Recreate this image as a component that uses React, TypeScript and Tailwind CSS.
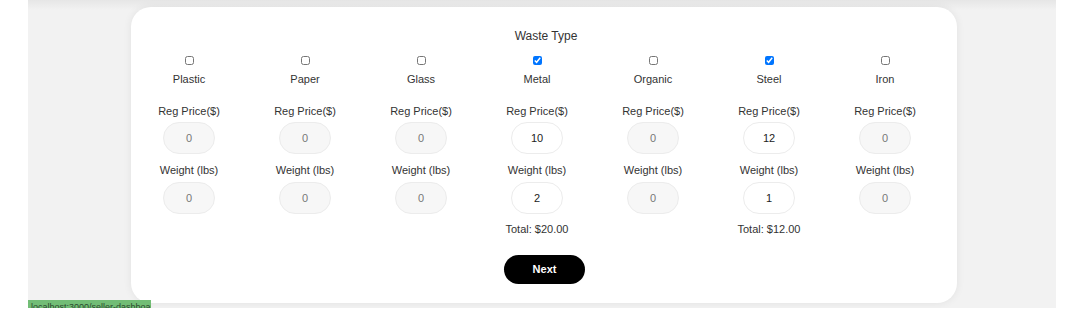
import React from "react";

type Item = { name: string; checked: boolean; price: string; weight: string; total?: string };

const items: Item[] = [
  { name: "Plastic", checked: false, price: "0", weight: "0" },
  { name: "Paper", checked: false, price: "0", weight: "0" },
  { name: "Glass", checked: false, price: "0", weight: "0" },
  { name: "Metal", checked: true, price: "10", weight: "2", total: "Total: $20.00" },
  { name: "Organic", checked: false, price: "0", weight: "0" },
  { name: "Steel", checked: true, price: "12", weight: "1", total: "Total: $12.00" },
  { name: "Iron", checked: false, price: "0", weight: "0" },
];

function Field({ value, active }: { value: string; active: boolean }) {
  return (
    <div
      className={
        "w-[52px] h-[32px] rounded-full border border-[#ececec] flex items-center justify-center text-[11px] " +
        (active ? "bg-white text-[#222]" : "bg-[#f7f7f7] text-[#777]")
      }
    >
      {value}
    </div>
  );
}

export default function App() {
  return (
    <div
      className="w-[1065px] h-[330px] bg-white relative overflow-hidden"
      style={{ fontFamily: '"Liberation Sans", Arial, sans-serif' }}
    >
      <div className="ml-[28px] w-[1028px] h-[308px] bg-[#f2f2f2] relative overflow-hidden pt-[7px] pl-[103px]">
        <div className="absolute top-0 left-0 right-0 h-[10px] bg-gradient-to-b from-[#e6e6e6] to-[#f2f2f2]" />
        <div className="relative w-[826px] h-[296px] rounded-[20px] bg-white shadow-[0_0_8px_rgba(0,0,0,0.07)] pt-[19px]">
          <div className="text-center text-[12px] leading-[20px] text-[#333] pl-[4px]">Waste Type</div>
          <div className="flex">
            {items.map((it) => (
              <div key={it.name} className="w-[116px] flex flex-col items-center text-[11px] text-[#333]">
                <div className="h-[12px] mt-[8px] flex items-center justify-center">
                  <input
                    type="checkbox"
                    defaultChecked={it.checked}
                    readOnly
                    className="w-[9px] h-[9px] m-0"
                  />
                </div>
                <div className="leading-[18px] mt-[4px]">{it.name}</div>
                <div className="leading-[18px] mt-[14px]">Reg Price($)</div>
                <div className="mt-[2px]">
                  <Field value={it.price} active={it.checked} />
                </div>
                <div className="leading-[18px] mt-[7px]">Weight (lbs)</div>
                <div className="mt-[3px]">
                  <Field value={it.weight} active={it.checked} />
                </div>
                {it.total && <div className="leading-[18px] mt-[6px]">{it.total}</div>}
              </div>
            ))}
          </div>
          <div className="flex justify-center mt-[17px] pl-[1px]">
            <button className="w-[81px] h-[29px] rounded-full bg-black text-white text-[11px] font-bold">
              Next
            </button>
          </div>
        </div>
        <div className="absolute left-0 top-[300px] w-[123px] h-[16px] bg-[#72bd76] text-[9px] leading-[14px] text-[#2c4a2e] px-[3px] whitespace-nowrap overflow-hidden">
          localhost:3000/seller-dashboard
        </div>
      </div>
    </div>
  );
}
